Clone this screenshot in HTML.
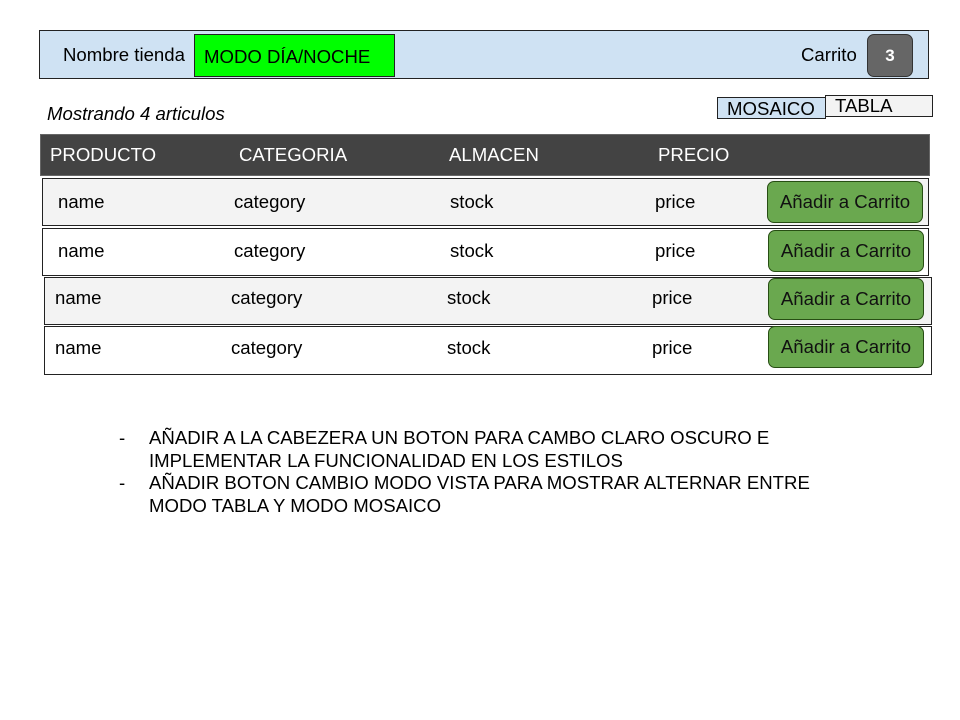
<!DOCTYPE html>
<html><head><meta charset="utf-8"><style>
body{margin:0;width:960px;height:720px;background:#fff;font-family:"Liberation Sans",sans-serif;position:relative;overflow:hidden;color:#000}
.a{position:absolute;box-sizing:border-box}
.t{position:absolute;font-size:18.6px;white-space:nowrap;line-height:20px}
.btn{position:absolute;box-sizing:border-box;background:#6aa84f;border:1px solid #274e13;border-radius:7px;font-size:18.6px;display:flex;align-items:center;justify-content:center;color:#111}
</style></head><body>
<div class="a" style="left:39px;top:30px;width:890px;height:49px;background:#cfe2f3;border:1px solid #222"></div>
<div class="t" style="left:63px;top:45px">Nombre tienda</div>
<div class="a" style="left:194px;top:34px;width:201px;height:43px;background:#00ff00;border:1px solid #222"></div>
<div class="t" style="left:204px;top:47px">MODO DÍA/NOCHE</div>
<div class="t" style="left:801px;top:45px">Carrito</div>
<div class="a" style="left:867px;top:34px;width:46px;height:43px;background:#666;border:1px solid #333;border-radius:7px;color:#fff;font-weight:bold;font-size:17px;display:flex;align-items:center;justify-content:center">3</div>
<div class="t" style="left:47px;top:104px;font-style:italic">Mostrando 4 articulos</div>
<div class="a" style="left:717px;top:97px;width:109px;height:22px;background:#cfe2f3;border:1px solid #222"></div>
<div class="t" style="left:727px;top:99px">MOSAICO</div>
<div class="a" style="left:825px;top:95px;width:108px;height:22px;background:#f3f3f3;border:1px solid #222"></div>
<div class="t" style="left:835px;top:96px">TABLA</div>
<div class="a" style="left:40px;top:134px;width:890px;height:42px;background:#434343;border:1px solid #666"></div>
<div class="t" style="left:50px;top:145px;color:#fff">PRODUCTO</div>
<div class="t" style="left:239px;top:145px;color:#fff">CATEGORIA</div>
<div class="t" style="left:449px;top:145px;color:#fff">ALMACEN</div>
<div class="t" style="left:658px;top:145px;color:#fff">PRECIO</div>

<div class="a" style="left:42px;top:178px;width:887px;height:48px;background:#f3f3f3;border:1px solid #222"></div>
<div class="t" style="left:58px;top:192px">name</div><div class="t" style="left:234px;top:192px">category</div><div class="t" style="left:450px;top:192px">stock</div><div class="t" style="left:655px;top:192px">price</div>
<div class="btn" style="left:767px;top:181px;width:156px;height:42px">Añadir a Carrito</div>

<div class="a" style="left:42px;top:228px;width:887px;height:48px;background:#fff;border:1px solid #222"></div>
<div class="t" style="left:58px;top:241px">name</div><div class="t" style="left:234px;top:241px">category</div><div class="t" style="left:450px;top:241px">stock</div><div class="t" style="left:655px;top:241px">price</div>
<div class="btn" style="left:768px;top:230px;width:156px;height:42px">Añadir a Carrito</div>

<div class="a" style="left:44px;top:277px;width:888px;height:48px;background:#f3f3f3;border:1px solid #222"></div>
<div class="t" style="left:55px;top:288px">name</div><div class="t" style="left:231px;top:288px">category</div><div class="t" style="left:447px;top:288px">stock</div><div class="t" style="left:652px;top:288px">price</div>
<div class="btn" style="left:768px;top:278px;width:156px;height:42px">Añadir a Carrito</div>

<div class="a" style="left:44px;top:326px;width:888px;height:49px;background:#fff;border:1px solid #222"></div>
<div class="t" style="left:55px;top:338px">name</div><div class="t" style="left:231px;top:338px">category</div><div class="t" style="left:447px;top:338px">stock</div><div class="t" style="left:652px;top:338px">price</div>
<div class="btn" style="left:768px;top:326px;width:156px;height:42px">Añadir a Carrito</div>

<div class="t" style="left:119px;top:427px;line-height:22.5px">-</div>
<div class="t" style="left:149px;top:427px;line-height:22.5px">AÑADIR A LA CABEZERA UN BOTON PARA CAMBO CLARO OSCURO E<br>IMPLEMENTAR LA FUNCIONALIDAD EN LOS ESTILOS</div>
<div class="t" style="left:119px;top:472px;line-height:22.5px">-</div>
<div class="t" style="left:149px;top:472px;line-height:22.5px">AÑADIR BOTON CAMBIO MODO VISTA PARA MOSTRAR ALTERNAR ENTRE<br>MODO TABLA Y MODO MOSAICO</div>
</body></html>
